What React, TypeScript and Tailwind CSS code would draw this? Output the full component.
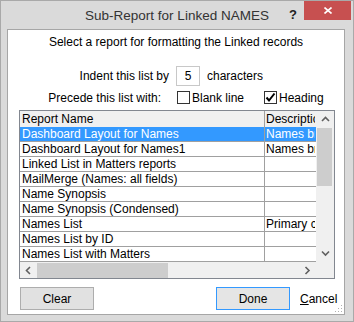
import React from "react";

interface ReportRow {
    name: string;
    description: string;
}

const rows: ReportRow[] = [
    { name: "Dashboard Layout for Names", description: "Names brief" },
    { name: "Dashboard Layout for Names1", description: "Names brief" },
    { name: "Linked List in Matters reports", description: "" },
    { name: "MailMerge (Names: all fields)", description: "" },
    { name: "Name Synopsis", description: "" },
    { name: "Name Synopsis (Condensed)", description: "" },
    { name: "Names List", description: "Primary contact" },
    { name: "Names List by ID", description: "" },
    { name: "Names List with Matters", description: "" },
];

const Checkbox: React.FC<{ checked?: boolean }> = ({ checked }) => (
    <div className="w-[13px] h-[13px] border border-[#333333] bg-white flex items-center justify-center shrink-0">
        {checked && (
            <svg width="11" height="11" viewBox="0 0 11 11">
                <path d="M1.5 5.5 L4 8.5 L9.5 1.5" stroke="#000" strokeWidth="2" fill="none" />
            </svg>
        )}
    </div>
);

const Chevron: React.FC<{ dir: "up" | "down" | "left" | "right" }> = ({ dir }) => {
    const d = {
        up: "M1 5 L4.5 1.5 L8 5",
        down: "M1 1.5 L4.5 5 L8 1.5",
        left: "M5 1 L1.5 4.5 L5 8",
        right: "M1.5 1 L5 4.5 L1.5 8",
    }[dir];
    const vertical = dir === "up" || dir === "down";
    return (
        <svg width={vertical ? 9 : 7} height={vertical ? 7 : 9} viewBox={vertical ? "0 0 9 7" : "0 0 7 9"}>
            <path d={d} stroke="#606060" strokeWidth="1.6" fill="none" />
        </svg>
    );
};

export default function App() {
    return (
        <div
            className="w-[354px] h-[322px] border border-[#a9a9a9] bg-[#dadada] flex flex-col text-[12px] text-black"
            style={{ fontFamily: '"Liberation Sans", Arial, sans-serif' }}
        >
            {/* title bar */}
            <div className="h-[28px] relative flex items-center justify-center shrink-0">
                <span className="text-[13.5px] text-[#333333] leading-none mt-[1px]">Sub-Report for Linked NAMES</span>
                <span className="absolute left-[288px] top-[4px] text-[13px] font-bold text-[#222222]">?</span>
                <div className="absolute right-[2px] top-0 w-[47px] h-[19px] bg-[#c75050] flex items-center justify-center">
                    <svg width="8" height="7" viewBox="0 0 8 7">
                        <path d="M0.5 0.5 L7.5 6.5 M7.5 0.5 L0.5 6.5" stroke="#fff" strokeWidth="1.6" />
                    </svg>
                </div>
            </div>

            {/* dialog body */}
            <div className="ml-[6px] mr-[8px] mb-[6px] flex-1 border border-[#a6a6a6] bg-white flex flex-col relative">
                <div className="pt-[5px] leading-[15px] text-center">Select a report for formatting the Linked records</div>

                <div className="mt-[16px] h-[20px] flex items-center">
                    <span className="w-[161px] text-right">Indent this list by</span>
                    <div className="ml-[7px] w-[24px] h-[20px] border border-[#c8c8c8] flex items-center justify-center">5</div>
                    <span className="ml-[7px]">characters</span>
                </div>

                <div className="mt-[4px] h-[15px] flex items-center">
                    <span className="w-[153px] text-right">Precede this list with:</span>
                    <div className="ml-[16px] w-[87px] flex items-center">
                        <Checkbox />
                        <span className="ml-[2px]">Blank line</span>
                    </div>
                    <Checkbox checked />
                    <span className="ml-[2px]">Heading</span>
                </div>

                {/* report list */}
                <div className="mt-[5px] ml-[11px] w-[316px] h-[169px] border border-[#828790] flex flex-col">
                    <div className="flex h-[151px]">
                        <div className="w-[296px] flex flex-col overflow-hidden">
                            <div className="h-[16px] flex bg-[#f0f0f0] leading-[16px] shrink-0">
                                <div className="w-[245px] pl-[2px] border-r border-[#a0a0a0]">Report Name</div>
                                <div className="w-[50px] pl-[1px] whitespace-nowrap overflow-hidden">Description</div>
                            </div>
                            {rows.map((row, i) => (
                                <div
                                    key={i}
                                    className={
                                        i === 0
                                            ? "h-[15px] flex border-b border-[#a0a0a0] bg-[#3399ff] text-white leading-[14px] shrink-0"
                                            : "h-[15px] flex border-b border-[#a0a0a0] leading-[14px] shrink-0"
                                    }
                                >
                                    <div className="w-[245px] pl-[2px] whitespace-nowrap overflow-hidden border-r border-[#a0a0a0]">{row.name}</div>
                                    <div className="w-[50px] pl-[1px] whitespace-nowrap overflow-hidden">{row.description}</div>
                                </div>
                            ))}
                        </div>
                        {/* vertical scrollbar */}
                        <div className="w-[18px] bg-[#f0f0f0] flex flex-col items-center">
                            <div className="h-[17px] flex items-center justify-center">
                                <Chevron dir="up" />
                            </div>
                            <div className="w-[15px] h-[58px] bg-[#cdcdcd] ml-[-1px]" />
                            <div className="flex-1" />
                            <div className="h-[17px] flex items-center justify-center">
                                <Chevron dir="down" />
                            </div>
                        </div>
                    </div>
                    {/* horizontal scrollbar */}
                    <div className="flex-1 bg-[#f0f0f0] flex items-center">
                        <div className="w-[17px] flex items-center justify-center">
                            <Chevron dir="left" />
                        </div>
                        <div className="w-[131px] h-[15px] bg-[#cdcdcd]" />
                        <div className="flex-1" />
                        <div className="w-[35px] flex items-center justify-start pl-[5px]">
                            <Chevron dir="right" />
                        </div>
                    </div>
                </div>

                {/* buttons */}
                <div className="mt-[8px] flex items-center h-[23px]">
                    <button className="ml-[12px] w-[74px] h-[23px] bg-[#e1e1e1] border border-[#adadad]">Clear</button>
                    <button className="ml-[122px] w-[74px] h-[23px] bg-[#e5e5e5] border border-[#3399ff]">Done</button>
                    <span className="ml-[10px]">
                        <span className="underline">C</span>ancel
                    </span>
                </div>

                {/* size grip */}
                <svg className="absolute right-[1px] bottom-[1px]" width="9" height="9" viewBox="0 0 9 9">
                    <rect x="7" y="1" width="1" height="1" fill="#b0b0b0" />
                    <rect x="7" y="4" width="1" height="1" fill="#b0b0b0" />
                    <rect x="4" y="4" width="1" height="1" fill="#b0b0b0" />
                    <rect x="7" y="7" width="1" height="1" fill="#b0b0b0" />
                    <rect x="4" y="7" width="1" height="1" fill="#b0b0b0" />
                    <rect x="1" y="7" width="1" height="1" fill="#b0b0b0" />
                </svg>
            </div>
        </div>
    );
}
